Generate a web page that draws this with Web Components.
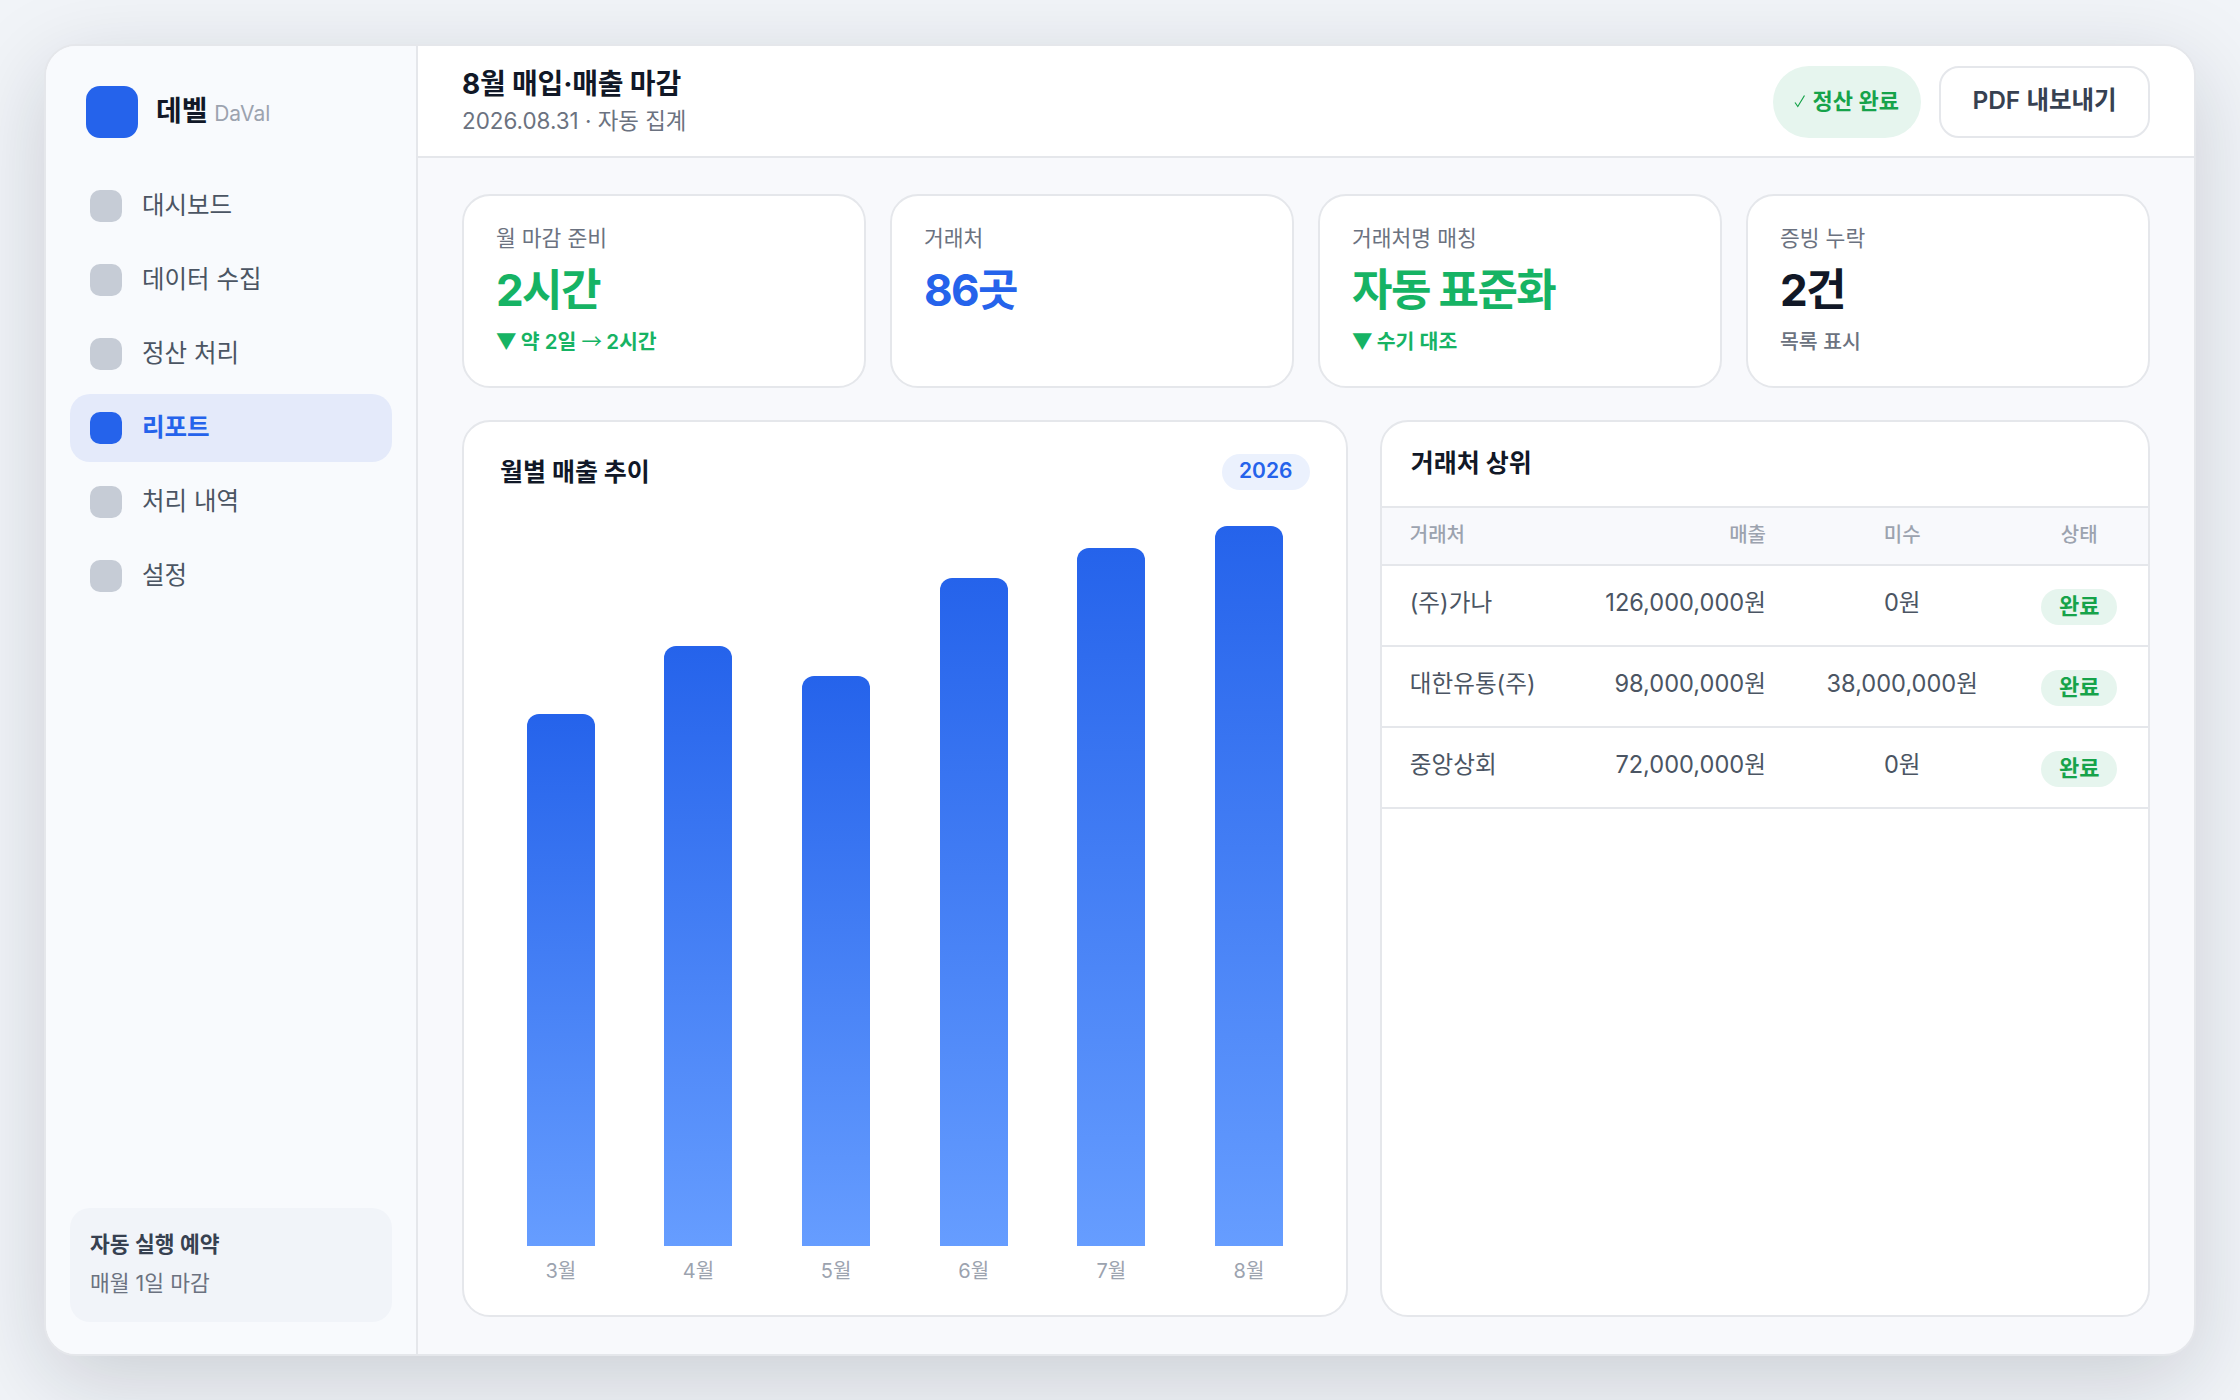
<!DOCTYPE html>
<html lang="ko">
<head>
<meta charset="utf-8">
<title>DaVal</title>
<style>
    html, body { margin: 0; padding: 0; }
    body {
        width: 2240px;
        height: 1400px;
        overflow: hidden;
        background: #f1f4f8;
        font-family: Inter, "Noto Sans CJK KR", sans-serif;
    }
</style>
</head>
<body>
<app-shell>
    <side-bar slot="side">
        <nav-item>대시보드</nav-item>
        <nav-item>데이터 수집</nav-item>
        <nav-item>정산 처리</nav-item>
        <nav-item active>리포트</nav-item>
        <nav-item>처리 내역</nav-item>
        <nav-item>설정</nav-item>
    </side-bar>
    <top-bar slot="top"></top-bar>
    <kpi-card label="월 마감 준비" value="2시간" note="▼ 약 2일 → 2시간" tone="green"></kpi-card>
    <kpi-card label="거래처" value="86곳" tone="blue"></kpi-card>
    <kpi-card label="거래처명 매칭" value="자동 표준화" note="▼ 수기 대조" tone="green"></kpi-card>
    <kpi-card label="증빙 누락" value="2건" note="목록 표시"></kpi-card>
    <sales-chart slot="chart"></sales-chart>
    <partner-table slot="table"></partner-table>
</app-shell>

<script>
class AppShell extends HTMLElement {
    connectedCallback() {
        const shadow = this.attachShadow({ mode: "open" });
        shadow.innerHTML = `
            <style>
                :host {
                    display: block;
                    box-sizing: border-box;
                    margin: 44px;
                    width: 2152px;
                    height: 1312px;
                }
                .shell {
                    display: flex;
                    height: 100%;
                    box-sizing: border-box;
                    border: 2px solid #e5e7eb;
                    border-radius: 32px;
                    overflow: hidden;
                    background: #f8f9fc;
                    box-shadow: 0 24px 88px rgba(15, 23, 42, .17);
                }
                .body {
                    flex: 1;
                    min-width: 0;
                    display: flex;
                    flex-direction: column;
                }
                main {
                    flex: 1;
                    min-height: 0;
                    display: flex;
                    flex-direction: column;
                    gap: 32px;
                    padding: 36px 44px 37px;
                }
                .kpis {
                    display: grid;
                    grid-template-columns: repeat(4, 1fr);
                    gap: 24px;
                }
                .panels {
                    flex: 1;
                    min-height: 0;
                    display: grid;
                    grid-template-columns: 1.15fr 1fr;
                    gap: 32px;
                }
            </style>
            <div class="shell">
                <slot name="side"></slot>
                <div class="body">
                    <slot name="top"></slot>
                    <main>
                        <div class="kpis"><slot></slot></div>
                        <div class="panels">
                            <slot name="chart"></slot>
                            <slot name="table"></slot>
                        </div>
                    </main>
                </div>
            </div>
        `;
    }
}

class SideBar extends HTMLElement {
    connectedCallback() {
        const shadow = this.attachShadow({ mode: "open" });
        shadow.innerHTML = `
            <style>
                :host {
                    display: flex;
                    flex-direction: column;
                    box-sizing: border-box;
                    width: 372px;
                    flex: none;
                    padding: 40px 24px 32px;
                    background: #f8fafd;
                    border-right: 2px solid #e5e7eb;
                }
                .brand {
                    display: flex;
                    align-items: center;
                    gap: 18px;
                    padding-left: 16px;
                    margin-bottom: 34px;
                }
                .logo {
                    width: 52px;
                    height: 52px;
                    border-radius: 14px;
                    background: #2563eb;
                }
                .name {
                    font-size: 28px;
                    line-height: 42px;
                    font-weight: 700;
                    color: #111827;
                }
                .name small {
                    font-size: 21px;
                    font-weight: 400;
                    color: #9ca3af;
                }
                nav {
                    flex: 1;
                    display: flex;
                    flex-direction: column;
                    gap: 6px;
                }
                .foot {
                    padding: 17px 20px 19px;
                    border-radius: 20px;
                    background: #f1f4f9;
                }
                .foot b {
                    display: block;
                    font-size: 21.5px;
                    font-weight: 600;
                    line-height: 39px;
                    color: #374151;
                }
                .foot span {
                    display: block;
                    font-size: 21.5px;
                    line-height: 39px;
                    color: #6b7280;
                }
            </style>
            <div class="brand">
                <div class="logo"></div>
                <div class="name">데벨 <small>DaVal</small></div>
            </div>
            <nav><slot></slot></nav>
            <div class="foot">
                <b>자동 실행 예약</b>
                <span>매월 1일 마감</span>
            </div>
        `;
    }
}

class NavItem extends HTMLElement {
    connectedCallback() {
        const shadow = this.attachShadow({ mode: "open" });
        shadow.innerHTML = `
            <style>
                :host {
                    display: flex;
                    align-items: center;
                    gap: 20px;
                    height: 68px;
                    padding: 0 20px;
                    border-radius: 20px;
                    font-size: 24.5px;
                    color: #4b5563;
                }
                :host([active]) {
                    background: #e4eafa;
                    color: #2563eb;
                    font-weight: 600;
                }
                i {
                    width: 32px;
                    height: 32px;
                    border-radius: 10px;
                    background: #c6ccd6;
                }
                :host([active]) i { background: #2563eb; }
                span { margin-bottom: 6px; }
            </style>
            <i></i><span><slot></slot></span>
        `;
    }
}

class TopBar extends HTMLElement {
    connectedCallback() {
        const shadow = this.attachShadow({ mode: "open" });
        shadow.innerHTML = `
            <style>
                :host {
                    display: flex;
                    align-items: center;
                    justify-content: space-between;
                    box-sizing: border-box;
                    height: 112px;
                    flex: none;
                    padding: 0 44px;
                    background: #fff;
                    border-bottom: 2px solid #e5e7eb;
                }
                h1 {
                    margin: 0;
                    font-size: 28px;
                    line-height: 40px;
                    letter-spacing: -.2px;
                    font-weight: 700;
                    color: #111827;
                }
                p {
                    margin: 0;
                    font-size: 22.4px;
                    line-height: 34px;
                    color: #6b7280;
                }
                .actions {
                    display: flex;
                    gap: 18px;
                    margin-top: 2px;
                }
                .done {
                    display: flex;
                    align-items: center;
                    gap: 5px;
                    box-sizing: border-box;
                    height: 72px;
                    padding: 0 22px 6px 20px;
                    border-radius: 36px;
                    background: #e6f5ee;
                    color: #16a34a;
                    font-size: 22px;
                    font-weight: 600;
                }
                .done svg { width: 14px; height: 14px; margin-top: 3px; }
                button {
                    box-sizing: border-box;
                    height: 72px;
                    width: 211px;
                    padding: 0 0 7px;
                    border: 2px solid #e5e7eb;
                    border-radius: 20px;
                    background: #fff;
                    color: #374151;
                    font: 600 24.5px Inter, "Noto Sans CJK KR", sans-serif;
                }
            </style>
            <div>
                <h1>8월 매입·매출 마감</h1>
                <p>2026.08.31 · 자동 집계</p>
            </div>
            <div class="actions">
                <div class="done">
                    <svg viewBox="0 0 14 14" fill="none" stroke="currentColor" stroke-width="1.2"><path d="M2 8.5 4.8 12.5 11.5 1.5"/></svg>
                    <span>정산 완료</span>
                </div>
                <button>PDF 내보내기</button>
            </div>
        `;
    }
}

class KpiCard extends HTMLElement {
    connectedCallback() {
        const shadow = this.attachShadow({ mode: "open" });
        const note = (this.getAttribute("note") || "").replace(/[▼→]/g, m => `<span class="sym">${m}</span>`);
        shadow.innerHTML = `
            <style>
                :host {
                    display: block;
                    box-sizing: border-box;
                    height: 194px;
                    padding: 26px 32px;
                    background: #fff;
                    border: 2px solid #e5e7eb;
                    border-radius: 28px;
                }
                .label {
                    font-size: 21.5px;
                    line-height: 32px;
                    color: #6b7280;
                }
                .value {
                    font-size: 44px;
                    line-height: 56px;
                    letter-spacing: -1.6px;
                    margin: 8px 0 8px;
                    font-weight: 700;
                    color: #111827;
                }
                .note {
                    font-size: 20.5px;
                    line-height: 32px;
                    font-weight: 500;
                    color: #6b7280;
                }
                .sym {
                    font-family: "Noto Sans CJK KR", sans-serif;
                    font-weight: 400;
                    line-height: 1;
                    letter-spacing: -1px;
                }
                :host([tone="green"]) .value { color: #16b364; }
                :host([tone="green"]) .note { color: #16b364; font-weight: 600; }
                :host([tone="blue"]) .value { color: #2563eb; }
            </style>
            <div class="label">${this.getAttribute("label")}</div>
            <div class="value">${this.getAttribute("value")}</div>
            ${note ? `<div class="note">${note}</div>` : ""}
        `;
    }
}

class SalesChart extends HTMLElement {
    connectedCallback() {
        const shadow = this.attachShadow({ mode: "open" });
        const months = [["3월", 73.9], ["4월", 83.4], ["5월", 79.2], ["6월", 92.8], ["7월", 97], ["8월", 100]];
        const cols = months.map(([name, pct]) => `
            <div class="col">
                <div class="track"><div class="bar" style="height:${pct}%"></div></div>
                <span>${name}</span>
            </div>`).join("");
        shadow.innerHTML = `
            <style>
                :host {
                    display: flex;
                    flex-direction: column;
                    box-sizing: border-box;
                    min-height: 0;
                    height: 100%;
                    padding: 32px 36px 32px;
                    background: #fff;
                    border: 2px solid #e5e7eb;
                    border-radius: 28px;
                }
                header {
                    display: flex;
                    align-items: center;
                    justify-content: space-between;
                    margin-bottom: 36px;
                }
                h2 {
                    margin: 0;
                    font-size: 25px;
                    line-height: 32px;
                    font-weight: 700;
                    color: #111827;
                }
                .year {
                    width: 88px;
                    height: 36px;
                    border-radius: 18px;
                    background: #ebf1fd;
                    color: #2563eb;
                    font-size: 21px;
                    font-weight: 600;
                    line-height: 34px;
                    text-align: center;
                }
                .plot {
                    flex: 1;
                    min-height: 0;
                    display: grid;
                    grid-template-columns: repeat(6, 1fr);
                    gap: 16px;
                }
                .col {
                    display: flex;
                    flex-direction: column;
                    align-items: center;
                    gap: 13px;
                }
                .track {
                    flex: 1;
                    width: 68px;
                    display: flex;
                    align-items: flex-end;
                }
                .bar {
                    width: 100%;
                    border-radius: 12px 12px 0 0;
                    background: linear-gradient(180deg, #2563eb, #669dff);
                }
                span {
                    font-size: 20px;
                    line-height: 24px;
                    color: #9ca3af;
                }
            </style>
            <header>
                <h2>월별 매출 추이</h2>
                <div class="year">2026</div>
            </header>
            <div class="plot">${cols}</div>
        `;
    }
}

class PartnerTable extends HTMLElement {
    connectedCallback() {
        const shadow = this.attachShadow({ mode: "open" });
        const rows = [
            ["(주)가나", "126,000,000원", "0원"],
            ["대한유통(주)", "98,000,000원", "38,000,000원"],
            ["중앙상회", "72,000,000원", "0원"]
        ];
        shadow.innerHTML = `
            <style>
                :host {
                    display: block;
                    box-sizing: border-box;
                    height: 100%;
                    background: #fff;
                    border: 2px solid #e5e7eb;
                    border-radius: 28px;
                    overflow: hidden;
                }
                h2 {
                    margin: 0;
                    height: 84px;
                    box-sizing: border-box;
                    padding: 0 29px;
                    font-size: 25px;
                    line-height: 82px;
                    font-weight: 700;
                    color: #111827;
                }
                table {
                    width: 100%;
                    table-layout: fixed;
                    border-collapse: collapse;
                }
                th, td {
                    box-sizing: border-box;
                    padding: 0 28px;
                    border-top: 2px solid #e5e7eb;
                    border-bottom: 2px solid #e5e7eb;
                    white-space: nowrap;
                }
                th {
                    height: 58px;
                    padding-bottom: 5px;
                    background: #f8f9fc;
                    font-size: 20px;
                    font-weight: 500;
                    color: #9ca3af;
                }
                td {
                    height: 81px;
                    padding-bottom: 10px;
                    font-size: 23.6px;
                    color: #4b5563;
                }
                .l { text-align: left; }
                .r { text-align: right; }
                .c { text-align: center; }
                .pill {
                    display: inline-block;
                    width: 76px;
                    height: 36px;
                    margin-top: 10px;
                    border-radius: 18px;
                    background: #e6f5ee;
                    color: #16a34a;
                    font-size: 22px;
                    font-weight: 600;
                    line-height: 34px;
                }
                td:last-child { padding: 0 0 8px; }
                th:last-child { padding: 0 0 5px; }
            </style>
            <h2>거래처 상위</h2>
            <table>
                <colgroup><col style="width:180px"><col style="width:231px"><col style="width:216px"><col style="width:137px"></colgroup>
                <thead>
                    <tr><th class="l">거래처</th><th class="r">매출</th><th class="c">미수</th><th class="c">상태</th></tr>
                </thead>
                <tbody>
                    ${rows.map(r => `<tr><td class="l">${r[0]}</td><td class="r">${r[1]}</td><td class="c">${r[2]}</td><td class="c"><span class="pill">완료</span></td></tr>`).join("")}
                </tbody>
            </table>
        `;
    }
}

customElements.define("app-shell", AppShell);
customElements.define("side-bar", SideBar);
customElements.define("nav-item", NavItem);
customElements.define("top-bar", TopBar);
customElements.define("kpi-card", KpiCard);
customElements.define("sales-chart", SalesChart);
customElements.define("partner-table", PartnerTable);
</script>
</body>
</html>
